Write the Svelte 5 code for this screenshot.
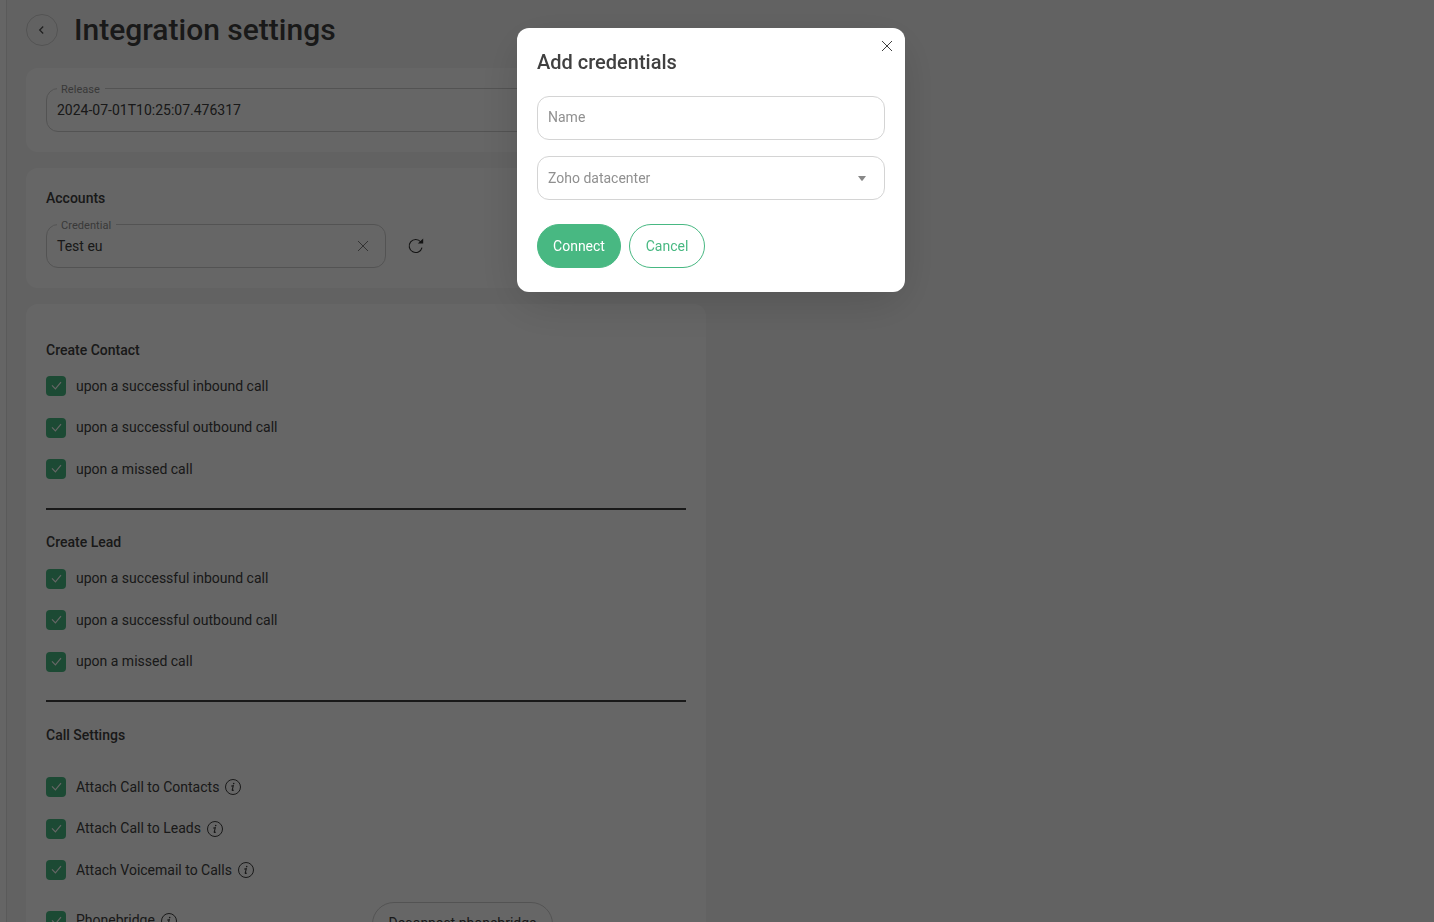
<script>
  const events = [
    'upon a successful inbound call',
    'upon a successful outbound call',
    'upon a missed call'
  ];
  const sections = [
    { title: 'Create Contact', rows: events },
    { title: 'Create Lead', rows: events }
  ];
  const attach = ['Attach Call to Contacts', 'Attach Call to Leads', 'Attach Voicemail to Calls'];
</script>

{#snippet check(label, info)}
  <label class="row">
    <span class="box">
      <svg width="20" height="20" viewBox="0 0 20 20"><path d="M6 9.4l3.4 3.5 5.6-6.8" fill="none" stroke="#fff" stroke-width="1.15" /></svg>
    </span>
    <span class="lbl">{label}</span>
    {#if info}
      <svg class="info" width="16" height="16" viewBox="0 0 16 16" fill="none" stroke="#404040">
        <circle cx="8" cy="8" r="7.5" />
        <path d="M6.3 7.1l2-.4-1.1 4.3c-.1.7.8.5 1.6-.2" stroke-width="1.1" />
        <circle cx="8.7" cy="4.6" r=".8" fill="#404040" stroke="none" />
      </svg>
    {/if}
  </label>
{/snippet}

<div class="app">
  <aside></aside>
  <main>
    <header>
      <button class="back" aria-label="Back">
        <svg width="10" height="10" viewBox="0 0 10 10"><path d="M6.2 1.5L2.7 5l3.5 3.5" fill="none" stroke="#505050" stroke-width="1.3" /></svg>
      </button>
      <h1>Integration settings</h1>
    </header>

    <section class="card">
      <fieldset><legend>Release</legend><span>2024-07-01T10:25:07.476317</span></fieldset>
    </section>

    <section class="card accounts">
      <h3>Accounts</h3>
      <div class="line">
        <fieldset class="cred">
          <legend>Credential</legend>
          <span>Test eu</span>
          <svg width="12" height="12" viewBox="0 0 12 12"><path d="M1 1l10 10M11 1L1 11" stroke="#808080" /></svg>
        </fieldset>
        <svg class="reload" width="16" height="16" viewBox="0 0 16 16">
          <path d="M12.8 4A6.5 6.5 0 1 0 14 9.6" fill="none" stroke="#303030" stroke-width="1.1" />
          <path d="M15.2 .4v5.2H9.8z" fill="#303030" />
        </svg>
      </div>
    </section>

    <section class="card options">
      {#each sections as s}
        <h3>{s.title}</h3>
        {#each s.rows as r}{@render check(r, false)}{/each}
        <hr />
      {/each}
      <h3 class="calls">Call Settings</h3>
      {#each attach as a}{@render check(a, true)}{/each}
      <div class="bridge">
        {@render check('Phonebridge', true)}
        <button>Deconnect phonebridge</button>
      </div>
    </section>
  </main>
</div>

<div class="overlay">
  <div class="modal">
    <button class="close" aria-label="Close">
      <svg width="12" height="12" viewBox="0 0 12 12"><path d="M1 1l10 10M11 1L1 11" stroke="#404040" /></svg>
    </button>
    <h2>Add credentials</h2>
    <div class="input name">Name</div>
    <div class="input">
      <span>Zoho datacenter</span>
      <svg width="8" height="5" viewBox="0 0 8 5"><path d="M0 0h8L4.6 4.6q-.6.6-1.2 0z" fill="#888" /></svg>
    </div>
    <div class="actions">
      <button class="primary">Connect</button>
      <button class="ghost">Cancel</button>
    </div>
  </div>
</div>

<style>
  :global(body) { overflow: hidden; background: #f6f6f6; }
  * { box-sizing: border-box; }
  .app, .overlay, button { font-family: Roboto, sans-serif; font-size: 14px; line-height: 20px; color: #404040; }
  .app { display: flex; height: 922px; overflow: hidden; background: #f6f6f6; }
  aside { width: 7px; flex: none; background: #fcfcfc; border-right: 1px solid #e2e2e2; }
  main { padding: 14px 19px 0; }
  header { display: flex; align-items: center; height: 32px; gap: 16px; margin-bottom: 22px; }
  h1, h2, h3 { margin: 0; font-weight: 500; }
  h1 { font-size: 30px; line-height: 32px; }
  button { display: flex; align-items: center; justify-content: center; padding: 0; background: none; border: 1px solid #d0d0d0; }
  .back { width: 32px; height: 32px; border-radius: 50%; }
  .card { width: 680px; background: #fff; border-radius: 12px; padding: 20px; margin-bottom: 16px; }
  h3 { font-size: 14px; line-height: 20px; }
  fieldset { display: flex; align-items: center; position: relative; height: 44px; margin: 0; padding: 0 16px 0 10px; min-width: 0; border: 1px solid #d0d0d0; border-radius: 12px; }
  legend { position: absolute; left: 10px; top: -7px; height: 16px; padding: 0 5px 0 4px; background: #fff; font-size: 11px; line-height: 16px; letter-spacing: .05px; color: #909090; }
  .accounts h3 { margin-bottom: 16px; }
  .line { display: flex; align-items: center; gap: 22px; }
  .cred { width: 340px; justify-content: space-between; }
  .options { padding-top: 36px; height: 700px; }
  .options h3 { margin-bottom: 5.6px; }
  .options .calls { margin-bottom: 21.7px; }
  hr { height: 2px; margin: 17.8px 0 22.5px; border: 0; background: #404040; }
  .row { display: flex; align-items: center; height: 41.5px; }
  .box { width: 20px; height: 20px; border-radius: 4px; background: #48b882; margin-right: 10px; }
  .box svg { display: block; }
  .lbl { padding-bottom: .8px; }
  .info { margin-left: 6px; }
  .bridge { display: flex; align-items: flex-start; padding-top: 9px; }
  .bridge .row { width: 326px; }
  .bridge button { width: 181px; height: 44px; margin-top: 2px; padding-bottom: 2px; border-radius: 22px; }

  .overlay { position: fixed; inset: 0; padding: 28px 12px 0 0; background: rgba(0, 0, 0, .6); display: flex; justify-content: center; align-items: flex-start; }
  .modal { position: relative; width: 388px; height: 264px; padding: 20px; border-radius: 12px; background: #fff; box-shadow: 0 12px 48px rgba(0, 0, 0, .15); }
  .close { position: absolute; right: 10px; top: 10px; width: 16px; height: 16px; border: 0; }
  h2 { font-size: 20px; line-height: 28px; margin-bottom: 20px; }
  .input { display: flex; align-items: center; justify-content: space-between; height: 44px; padding: 0 18px 0 10px; border: 1px solid #d4d4d4; border-radius: 12px; color: #909090; margin-bottom: 16px; }
  .name { padding-bottom: 2px; }
  .actions { display: flex; gap: 8px; padding-top: 8px; }
  .actions button { height: 44px; border-radius: 22px; border-color: #48b882; }
  .primary { width: 84px; background: #48b882; color: #fff; }
  .ghost { width: 76px; color: #48b882; }
</style>
